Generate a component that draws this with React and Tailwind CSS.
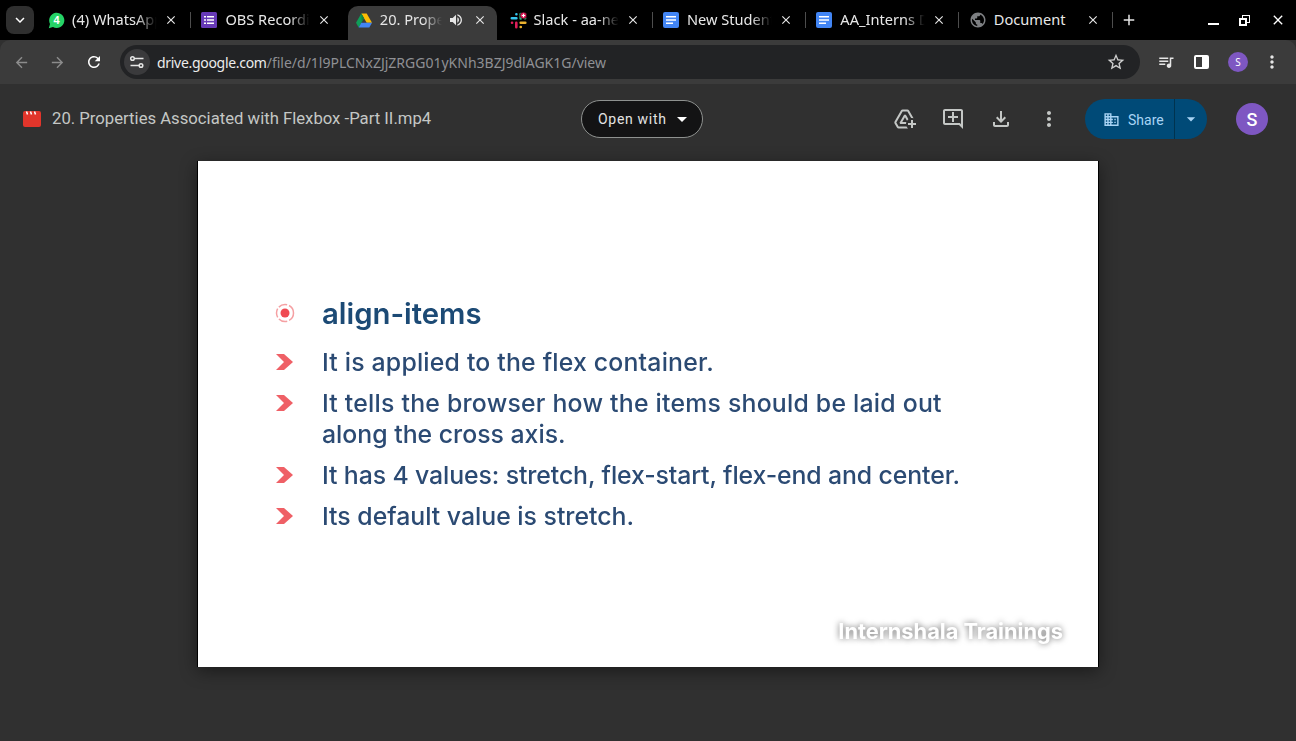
import React from "react";
import { MdArrowBack, MdArrowForward, MdRefresh, MdStarBorder, MdQueueMusic, MdMoreVert, MdAddToDrive, MdOutlineAddComment, MdOutlineFileDownload, MdVolumeUp, MdArrowDropDown, MdDomain, MdPublic, MdClose, MdAdd, MdKeyboardArrowDown } from "react-icons/md";

const WhatsApp = () => (
  <svg width="17" height="17" viewBox="0 0 17 17">
    <path d="M0.800 16.200l1.200-4.300A7.600 7.600 0 1 1 5 15z" fill="#25d366" />
    <text x="8.500" y="12.300" textAnchor="middle" fontSize="11" fontWeight="700" fill="#fff" fontFamily="Liberation Sans, sans-serif">4</text>
  </svg>
);
const Forms = () => (
  <svg width="16" height="16" viewBox="0 0 16 16">
    <rect width="16" height="16" rx="1.500" fill="#673ab7" />
    <path d="M3 4h2v1.500H3zM3 7.300h2v1.500H3zM3 10.500h2V12H3zM6 4h7v1.500H6zM6 7.300h7v1.500H6zM6 10.500h7V12H6z" fill="#fff" />
  </svg>
);
const Drive = () => (
  <svg width="16" height="15" viewBox="0 0 16 15">
    <path d="M5.300 0.500h5.400L16 9.800h-5.300z" fill="#fbbc04" />
    <path d="M5.300 0.500L0 9.800l2.700 4.700L8 5.200z" fill="#0f9d58" />
    <path d="M5.300 9.800H16l-2.700 4.700H2.700z" fill="#4285f4" />
    <path d="M5.300 0.500L8 5.200l-2.200 3.900z" fill="#188038" />
  </svg>
);
const Slack = () => (
  <svg width="17" height="17" viewBox="0 0 17 17" strokeWidth="2.600" strokeLinecap="round" fill="none">
    <path d="M1.800 6.300h4.600M6.400 2.200v0.100" stroke="#36c5f0" />
    <path d="M6.300 10.700v4.600M2 10.700h0.100" stroke="#e01e5a" />
    <path d="M10.700 2v4.400M15 6.300h0.100" stroke="#2eb67d" />
    <path d="M10.700 10.700h4.600M10.700 15h0.100" stroke="#ecb22e" />
    <circle cx="13.500" cy="3.500" r="3.300" fill="#e01e5a" stroke="#000" strokeWidth="0.5" />
    <path d="M11.800 3.500h3.400M13.500 1.800v3.400" stroke="#fff" strokeWidth="1.100" strokeLinecap="butt" />
  </svg>
);
const Docs = () => (
  <svg width="16" height="16" viewBox="0 0 16 16">
    <rect width="16" height="16" rx="2" fill="#4285f4" />
    <path d="M3 4h10v1.500H3zM3 7.300h10v1.500H3zM3 10.500h7V12H3z" fill="#fff" />
  </svg>
);
const Globe = () => <MdPublic className="text-[18px] text-[#7d7f82] -ml-px" />;
const Clapper = () => (
  <svg width="18" height="16" viewBox="0 0 18 16">
    <path d="M0 2a2 2 0 0 1 2-2h14a2 2 0 0 1 2 2v12a2 2 0 0 1-2 2H2a2 2 0 0 1-2-2z" fill="#e1352b" />
    <path d="M3.500 0.500l1 3M7.500 0.500l1 3M11.500 0.500l1 3" stroke="#fff" strokeWidth="1.500" />
  </svg>
);
const SiteInfo = () => (
  <svg width="16" height="16" viewBox="0 0 16 16" fill="none" stroke="#e6e6e6" strokeWidth="1.500">
    <path d="M6 4.500h8.500M1.500 11.500H10" />
    <circle cx="3.500" cy="4.500" r="1.800" />
    <circle cx="12" cy="11.500" r="1.800" />
  </svg>
);

const tabs = [
  { t: "(4) WhatsApp", i: <WhatsApp />, sep: true },
  { t: "OBS Recording", i: <Forms /> },
  { t: "20. Properties", i: <Drive />, active: true },
  { t: "Slack - aa-new", i: <Slack />, sep: true },
  { t: "New Student", i: <Docs />, sep: true },
  { t: "AA_Interns Data", i: <Docs />, sep: true },
  { t: "Document", i: <Globe />, sep: true, full: true },
];

function Tab({ tab }) {
  if (tab.active) {
    return (
      <div className="relative h-[34px] w-[154.800px] shrink-0 self-end px-[3px]">
        <div className="flex h-full items-center rounded-t-[10px] bg-[#3b3b3b] pb-[6px] pl-[8px] text-white">
          <span className="flex w-[24px] shrink-0 items-center">{tab.i}</span>
          <span className="w-[62px] shrink-0 overflow-hidden whitespace-nowrap text-[14.600px] text-[#e6e6e6] [mask-image:linear-gradient(90deg,#000_70%,transparent_100%)]">{tab.t}</span>
          <MdVolumeUp className="ml-[6px] shrink-0 text-[16px] text-[#e6e6e6]" />
          <MdClose className="ml-[9px] shrink-0 text-[14px] text-[#e6e6e6]" />
        </div>
      </div>
    );
  }
  return (
    <div className="flex h-[40px] w-[153.400px] shrink-0 items-center pl-[10px]">
      <span className="flex w-[24px] shrink-0 items-center">{tab.i}</span>
      <span className={`-mt-[1px] w-[92px] shrink-0 overflow-hidden whitespace-nowrap text-[14.600px] text-[#e8e8e8] ${tab.full ? "" : "[mask-image:linear-gradient(90deg,#000_70%,transparent_92%)]"}`}>{tab.t}</span>
      <MdClose className="shrink-0 text-[14px] text-[#e6e6e6]" />
      {tab.sep && <span className="ml-[12px] h-[16px] w-px shrink-0 bg-[#4d4d4d]" />}
    </div>
  );
}

const Bullet = () => (
  <svg width="20" height="18" viewBox="0 0 20 18" className="shrink-0">
    <path d="M1 1h8l9 8-9 8H1l8-8z" fill="#ef6066" />
  </svg>
);

function Row({ children, className = "" }) {
  return (
    <div className={`flex items-start ${className}`}>
      <span className="mr-[27px] mt-[6px] flex w-[20px] shrink-0"><Bullet /></span>
      <div className="text-[24.800px] font-medium leading-[31px] text-[#2b4a73]">{children}</div>
    </div>
  );
}

export default function App() {
  return (
    <div className="flex h-[741px] w-[1296px] flex-col overflow-hidden bg-[#303030] [font-family:'Noto_Sans',sans-serif]">
      {/* tab strip */}
      <div className="flex h-[40px] shrink-0 items-center bg-black">
        <div className="ml-[6px] mr-[4px] flex h-[28px] w-[28px] shrink-0 items-center justify-center rounded-[8px] bg-[#2f2f2f] text-white">
          <MdKeyboardArrowDown className="text-[18px]" />
        </div>
        {tabs.map((t) => <Tab key={t.t} tab={t} />)}
        <MdAdd className="ml-[7px] text-[18px] text-[#e6e6e6]" />
        <div className="ml-auto mr-[10px] flex items-center gap-[20px] text-white">
          <span className="mt-[8px] h-[2px] w-[11px] bg-white" />
          <span className="relative h-[11px] w-[11px]">
            <span className="absolute right-0 top-0 h-[8px] w-[8px] border-[1.500px] border-white" />
            <span className="absolute bottom-0 left-0 h-[8px] w-[8px] border-[2px] border-white bg-black" />
          </span>
          <MdClose className="text-[16px]" />
        </div>
      </div>

      {/* toolbar */}
      <div className="flex h-[44px] shrink-0 items-center rounded-t-[10px] bg-[#3b3b3b]">
        <MdArrowBack className="ml-[13px] text-[17px] text-[#8c8c8c]" />
        <MdArrowForward className="ml-[19px] text-[17px] text-[#8c8c8c]" />
        <MdRefresh className="ml-[19px] text-[18px] text-white" />
        <div className="ml-[17px] flex h-[34px] w-[1020px] items-center rounded-full bg-[#222325]">
          <span className="ml-[4px] flex h-[26px] w-[26px] items-center justify-center rounded-full bg-[#3a3a3c]">
            <SiteInfo />
          </span>
          <span className="ml-[7px] whitespace-nowrap text-[14px] text-[#ececec]"><span className="tracking-[-0.300px]">drive.google.com</span><span className="text-[#8f9094]">/file/d/1l9PLCNxZJjZRGG01yKNh3BZJ9dlAGK1G/view</span></span>
          <MdStarBorder className="ml-auto mr-[14px] text-[20px] text-[#cfcfcf]" />
        </div>
        <MdQueueMusic className="ml-[17px] text-[18px] text-[#e6e6e6]" />
        <span className="ml-[19px] flex h-[14px] w-[15px] overflow-hidden rounded-[2px] border-[2px] border-white">
          <span className="w-1/2" />
          <span className="w-1/2 bg-white" />
        </span>
        <span className="ml-[19px] flex h-[20px] w-[20px] items-center justify-center rounded-full bg-[#7e57c2] text-[10px] text-white">S</span>
        <MdMoreVert className="ml-[14px] text-[20px] text-[#e6e6e6]" />
      </div>

      {/* drive header */}
      <div className="flex h-[77px] shrink-0 items-center pb-[7px] [font-family:Roboto,sans-serif]">
        <span className="ml-[23px] flex"><Clapper /></span>
        <span className="-mt-[1px] ml-[11px] w-[529px] whitespace-nowrap text-[16.700px] text-[#c4c7c5]">20. Properties Associated with Flexbox -Part II.mp4</span>
        <div className="flex h-[38px] w-[122px] items-center rounded-full border border-[#8e918f] bg-[#131314] pl-[16px] text-[14px] tracking-[0.700px] text-[#e3e3e3]">
          Open with
          <MdArrowDropDown className="ml-[3px] text-[24px] text-white" />
        </div>
        <MdAddToDrive className="ml-[190px] text-[24px] text-[#c4c7c5]" />
        <MdOutlineAddComment className="ml-[24px] text-[24px] text-[#c4c7c5]" />
        <MdOutlineFileDownload className="ml-[24px] text-[24px] text-[#c4c7c5]" />
        <MdMoreVert className="ml-[24px] text-[24px] text-[#c4c7c5]" />
        <div className="ml-[24px] flex h-[40px] w-[122px] items-center rounded-full bg-[#004a77] text-[#a8d4f5]">
          <MdDomain className="ml-[18px] text-[17px]" />
          <span className="mt-[2px] ml-[8px] w-[46px] text-[14px]">Share</span>
          <span className="h-full w-px bg-[#00334f]" />
          <MdArrowDropDown className="ml-[6px] text-[20px]" />
        </div>
        <span className="ml-[29px] flex h-[32px] w-[32px] items-center justify-center rounded-full bg-[#7e57c2] text-[18px] font-medium text-white">S</span>
      </div>

      {/* slide */}
      <div className="flex justify-center">
        <div className="relative flex h-[506px] w-[902px] flex-col border-x border-black bg-white pl-[77px] pt-[134px] shadow-[0_4px_16px_rgba(0,0,0,0.45)] [font-family:Inter,sans-serif]">
          <div className="blur-[0.4px]">
            <div className="flex items-center">
              <svg width="20" height="20" viewBox="0 0 20 20" className="mr-[27px] shrink-0">
                <circle cx="10" cy="10" r="8.500" fill="none" stroke="#f5a0a3" strokeWidth="1.500" strokeDasharray="9 2" />
                <circle cx="10" cy="10" r="4.500" fill="#ef4a52" />
              </svg>
              <span className="translate-y-[1px] text-[29.300px] font-semibold leading-[36px] text-[#1c4a75]">align-items</span>
            </div>
            <Row className="mt-[16px]"><span className="tracking-[0.200px]">It is applied to the flex container.</span></Row>
            <Row className="mt-[10px]"><span className="tracking-[0.230px]">It tells the browser how the items should be laid out</span><br />along the cross axis.</Row>
            <Row className="mt-[10px]"><span className="tracking-[-0.100px]">It has 4 values: stretch, flex-start, flex-end and center.</span></Row>
            <Row className="mt-[10px]">Its default value is stretch.</Row>
          </div>
          <div className="absolute right-[35px] top-[454px] text-[21.800px] font-bold text-white blur-[0.6px] [text-shadow:0_0_6px_rgba(0,0,0,0.6)]">Internshala Trainings</div>
        </div>
      </div>
    </div>
  );
}
